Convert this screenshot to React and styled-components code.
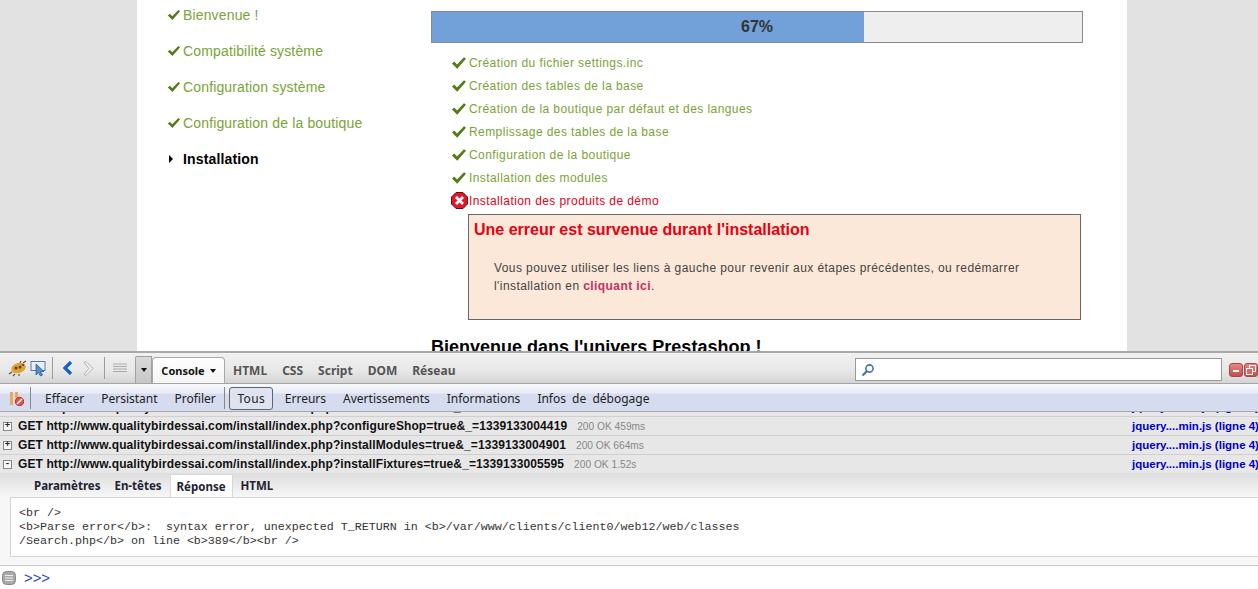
import React from "react";
import styled, { createGlobalStyle } from "styled-components";

const Global = createGlobalStyle`
  html, body { margin: 0; padding: 0; background: #e1e2e1; overflow: hidden; }
  #root { width: 1258px; height: 589px; overflow: hidden; }
  * { box-sizing: border-box; }
`;

const Screen = styled.div`
  width: 1258px; height: 589px; display: flex; flex-direction: column;
  font-family: "Liberation Sans", Arial, sans-serif;
`;
const Viewport = styled.div`
  height: 351px; overflow: hidden; background: #e1e2e1; display: flex;
  padding-left: 137px;
`;
const Page = styled.div`
  width: 990px; height: 400px; background: #fff; display: flex; padding-left: 30px;
`;
const Side = styled.ul`
  list-style: none; margin: 0; padding: 0; width: 264px;
`;
const SideItem = styled.li`
  height: 36px; display: flex; align-items: center; gap: 2px; font-size: 14px; letter-spacing: 0.15px;
  color: ${p => (p.$active ? "#000" : "#7aa336")};
  font-weight: ${p => (p.$active ? "bold" : "normal")};
  padding-bottom: 6px;
`;
const SideMark = styled.span`
  width: 14px; height: 14px; display: flex; align-items: center; justify-content: ${p => (p.$start ? "flex-start" : "center")}; flex: none;
  padding-left: ${p => (p.$start ? "1px" : "0")};
`;
const Main = styled.div`
  width: 652px; padding-top: 11px;
`;
const Progress = styled.div`
  height: 32px; border: 1px solid #8a8a8a; background: #eeeeee; position: relative;
  display: flex; align-items: center; justify-content: center;
`;
const Fill = styled.div`
  position: absolute; left: 0; top: 0; bottom: 0; background: #72a0d8;
`;
const Percent = styled.span`
  position: relative; font-weight: bold; font-size: 16px; color: #333;
`;
const Steps = styled.ul`
  list-style: none; margin: 8px 0 0; padding: 0 0 0 20px;
`;
const Step = styled.li`
  height: 23px; display: flex; align-items: center; font-size: 12px; letter-spacing: 0.42px;
  color: ${p => (p.$error ? "#e2001a" : "#7aa336")};
`;
const StepMark = styled.span`
  width: 18px; height: 18px; flex: none; display: flex; align-items: center; justify-content: flex-start;
`;
const ErrorBox = styled.div`
  margin: 2px 0 0 37px; width: 613px; height: 106px; border: 1px solid #666;
  background: #fbe8d8; padding: 6px 5px 0;
`;
const ErrorTitle = styled.div`
  color: #e60012; font-weight: bold; font-size: 16px; line-height: 18px;
`;
const ErrorText = styled.p`
  margin: 21px 20px 0 20px; font-size: 12px; line-height: 17.5px; color: #444; letter-spacing: 0.42px;
`;
const ErrorLink = styled.b`
  color: #c2305f;
`;
const Welcome = styled.h2`
  margin: 17px 0 0; font-size: 18px; line-height: 21px; color: #000; font-weight: bold;
`;

const Bug = styled.div`
  height: 238px; display: flex; flex-direction: column; background: #fff;
  font-family: "Noto Sans", "Open Sans", sans-serif; color: #222;
`;
const TopBar = styled.div`
  height: 33px; flex: none; border-top: 2px solid #a9a9a9; border-bottom: 1px solid #a5a5a5;
  background: linear-gradient(#f1f1f1, #e7e7e7 60%, #d4d4d4);
  display: flex; align-items: flex-end; padding-left: 7px; position: relative;
`;
const IconButton = styled.span`
  width: ${p => p.$w || 20}px; height: 30px; flex: none; display: flex; align-items: center; justify-content: center;
`;
const Sep = styled.span`
  width: 1px; height: 22px; background: #9c9c9c; flex: none; margin: 0 ${p => p.$m || 5}px 4px;
`;
const DropTab = styled.span`
  width: 17px; height: 27px; flex: none; margin-left: 5px; background: linear-gradient(#d9d9d9,#c7c7c7);
  border: 1px solid #a0a0a0; border-bottom: none; display: flex; align-items: center; justify-content: center;
  border-radius: 2px 0 0 0;
`;
const Caret = styled.span`
  width: 0; height: 0; border-left: 3.5px solid transparent; border-right: 3.5px solid transparent;
  border-top: 4px solid #111; display: inline-block;
`;
const ActiveTab = styled.span`
  width: 73px; height: 26px; margin: 0 8px 0 0; flex: none; background: linear-gradient(#fff, #f4f4f4);
  border: 1px solid #a8a8a8; border-bottom: none; border-radius: 4px 4px 0 0; display: flex; align-items: center; justify-content: center;
  gap: 5px; font-weight: bold; font-size: 11px; color: #111;
`;
const Tab = styled.span`
  height: 26px; flex: none; display: flex; align-items: center; margin-right: 15px; font-weight: bold; font-size: 12px; color: #555;
`;
const Search = styled.div`
  position: absolute; left: 855px; top: 5px; width: 367px; height: 23px; border: 1px solid #9a9a9a; background: #fff;
  display: flex; align-items: center; padding-left: 5px;
`;
const WinButtons = styled.div`
  position: absolute; left: 1229px; top: 10px; display: flex; gap: 1px;
`;
const WinButton = styled.span`
  width: 14px; height: 14px; border-radius: 3px; background: linear-gradient(#e88686,#c94a4a); border: 1px solid #b04444;
  display: flex; align-items: center; justify-content: center; flex: none;
`;
const SubBar = styled.div`
  height: 28px; flex: none; display: flex; align-items: center; padding: 1px 0 0 10px;
  background: linear-gradient(#f8f9fc, #e9ecf6 9px, #d6dbef 10px, #d6dcef);
  border-bottom: 1px solid #a9a9a9; font-size: 12px; color: #222; position: relative; z-index: 1;
`;
const SubButton = styled.span`
  flex: none; padding: 0 8.5px; display: flex; align-items: center; height: 23px; white-space: nowrap; word-spacing: ${p => p.$ws || 0}px;
  ${p => p.$on && `border: 1px solid #5c6470; border-radius: 3px; background: #dfe3f0; width: 44px; padding: 0; justify-content: center; margin: 0 3px 0 4px; letter-spacing: 0.4px;`}
`;
const SubSep = styled.span`
  width: 1px; height: 22px; background: #888; flex: none; margin: 0 ${p => p.$r || 0}px 0 ${p => p.$l || 0}px;
`;
const Logs = styled.div`
  flex: 1; display: flex; flex-direction: column; min-height: 0; overflow: hidden;
`;
const Row = styled.div`
  height: 19px; flex: none; display: flex; align-items: center; background: #e7e7e7; border-top: 1px solid #d0d0d0;
  padding-left: 3px; position: relative; font-size: 11px; white-space: nowrap;
  font-family: "Liberation Sans", sans-serif;
  margin-top: ${p => p.$offset || 0}px;
`;
const Toggle = styled.span`
  width: 9px; height: 9px; border: 1px solid #888; background: #f8f8f8; flex: none; margin-right: 6px;
  display: flex; align-items: center; justify-content: center; position: relative;
  font: bold 9px/7px "Liberation Mono", monospace; color: #222;
`;
const Url = styled.b`
  color: #111; font-size: 12px; letter-spacing: 0.1px; font-family: "Liberation Sans", sans-serif;
`;
const Status = styled.span`
  color: #888; margin-left: 10px; font-size: 10.2px;
`;
const Source = styled.span`
  position: absolute; left: 1132px; color: #0000c8; font-weight: bold; font-size: 11.5px;
`;
const Detail = styled.div`
  flex: none; background: linear-gradient(#dedede, #f7f7f7 24px); padding-left: 10px; height: 92px; display: flex; flex-direction: column;
`;
const DetailTabs = styled.div`
  height: 24px; flex: none; display: flex; align-items: flex-end; padding-left: 18px; font-family: "Noto Sans", sans-serif;
`;
const DetailTab = styled.span`
  height: 23px; padding: 0 6px; flex: none; display: flex; align-items: center; font-size: 11.5px; font-weight: bold; color: #223;
  margin-right: 2px;
  ${p => p.$on && `background: #fff; border: 1px solid #d8d8d8; border-bottom: none;`}
`;
const Code = styled.pre`
  margin: 0; height: 60px; border: 1px solid #d4d4d4; border-right: none; background: #fff; padding: 8px 0 0 8px;
  font: 11.67px/14px "Liberation Mono", monospace; color: #333;
`;
const CmdLine = styled.div`
  flex: 1; border-top: 1px solid #ccc; display: flex; align-items: center; padding-left: 2px; gap: 8px;
  background: #fff;
`;
const Prompt = styled.span`
  color: #2a3fc0; font: 15px "Liberation Sans", sans-serif; letter-spacing: -0.1px;
`;

const Check = () => (
  <svg width="16" height="14" viewBox="0 0 16 14">
    <path d="M1 7.5 L3.2 5.6 L6 8.5 L13 1.2 L15 2.8 L6.2 12.8 Z" fill="#567a16" />
  </svg>
);
const Play = () => (
  <svg width="6" height="8" viewBox="0 0 6 8"><path d="M1 0 L5 4 L1 8 Z" fill="#000" /></svg>
);
const ErrIcon = () => (
  <svg width="17" height="17" viewBox="0 0 17 17">
    <path d="M5 .5 H12 L16.5 5 V12 L12 16.5 H5 L.5 12 V5 Z" fill="#e0182c" stroke="#5e0f18" />
    <path d="M5 5 L12 12 M12 5 L5 12" stroke="#fff" strokeWidth="2.8" />
  </svg>
);

const sideItems = ["Bienvenue !", "Compatibilité système", "Configuration système", "Configuration de la boutique"];
const steps = [
  "Création du fichier settings.inc",
  "Création des tables de la base",
  "Création de la boutique par défaut et des langues",
  "Remplissage des tables de la base",
  "Configuration de la boutique",
  "Installation des modules",
];
const rows = [
  ["configureShop", "1339133004419", "459ms", true],
  ["installModules", "1339133004901", "664ms", true],
  ["installFixtures", "1339133005595", "1.52s", false],
];

export default function App() {
  return (
    <Screen>
      <Global />
      <Viewport>
        <Page>
          <Side>
            {sideItems.map(s => (
              <SideItem key={s}><SideMark><Check /></SideMark>{s}</SideItem>
            ))}
            <SideItem $active><SideMark $start><Play /></SideMark>Installation</SideItem>
          </Side>
          <Main>
            <Progress>
              <Fill style={{ width: "66.4%" }} />
              <Percent>67%</Percent>
            </Progress>
            <Steps>
              {steps.map(s => (
                <Step key={s}><StepMark><Check /></StepMark>{s}</Step>
              ))}
              <Step $error><StepMark><ErrIcon /></StepMark>Installation des produits de démo</Step>
            </Steps>
            <ErrorBox>
              <ErrorTitle>Une erreur est survenue durant l'installation</ErrorTitle>
              <ErrorText>
                Vous pouvez utiliser les liens à gauche pour revenir aux étapes précédentes, ou redémarrer l'installation en <ErrorLink>cliquant ici</ErrorLink>.
              </ErrorText>
            </ErrorBox>
            <Welcome>Bienvenue dans l'univers Prestashop !</Welcome>
          </Main>
        </Page>
      </Viewport>
      <Bug>
        <TopBar>
          <IconButton $w={22}>
            <svg width="20" height="17" viewBox="0 0 20 17">
              <path d="M4 12 L1 14 M7 14 L5 16 M11 14 L11 16 M15 3 L18 1 M12 3 L13 1" stroke="#5a4a30" strokeWidth="1.1" />
              <ellipse cx="10.5" cy="8" rx="7.5" ry="5" fill="#e0a232" transform="rotate(-18 10.5 8)" />
              <circle cx="8" cy="8" r="1.5" fill="#5c3a14" /><circle cx="12" cy="7" r="1.5" fill="#5c3a14" />
              <circle cx="15" cy="5" r="1" fill="#5c3a14" />
            </svg>
          </IconButton>
          <IconButton $w={19}>
            <svg width="17" height="17" viewBox="0 0 17 17">
              <rect x="1" y="1.5" width="14" height="9" fill="#e9eef7" stroke="#5a7ca8" />
              <path d="M6 4 L6 15 L8.5 12.5 L10.5 16 L12.5 15 L10.5 11.5 L14 11.5 Z" fill="#4f8fd8" stroke="#24527f" strokeWidth=".7" />
            </svg>
          </IconButton>
          <Sep $m={4} />
          <IconButton $w={20}>
            <svg width="11" height="14" viewBox="0 0 11 14"><path d="M9 1 L3 7 L9 13" fill="none" stroke="#1360c4" strokeWidth="3.2" /></svg>
          </IconButton>
          <IconButton $w={22}>
            <svg width="11" height="15" viewBox="0 0 11 15"><path d="M1 1.5 L3 .5 L10 7.5 L3 14.5 L1 13.5 L6 7.5 Z" fill="#f2f2f2" stroke="#b0b0b0" /></svg>
          </IconButton>
          <Sep $m={5} />
          <IconButton $w={20}>
            <svg width="14" height="10" viewBox="0 0 14 10"><path d="M0 1 H14 M0 3.5 H14 M0 6 H14 M0 8.5 H14" stroke="#aaa" /></svg>
          </IconButton>
          <DropTab><Caret /></DropTab>
          <ActiveTab>Console<Caret /></ActiveTab>
          <Tab>HTML</Tab><Tab>CSS</Tab><Tab>Script</Tab><Tab>DOM</Tab><Tab>Réseau</Tab>
          <Search>
            <svg width="14" height="14" viewBox="0 0 14 14">
              <circle cx="8.5" cy="5.5" r="3.6" fill="#fff" stroke="#3e75a8" strokeWidth="1.6" />
              <path d="M6 8 L1.5 12.5" stroke="#3e75a8" strokeWidth="2.2" />
            </svg>
          </Search>
          <WinButtons>
            <WinButton><svg width="8" height="8" viewBox="0 0 8 8"><path d="M1 5 H7" stroke="#fff" strokeWidth="2" /></svg></WinButton>
            <WinButton><svg width="10" height="10" viewBox="0 0 10 10"><rect x="3.5" y=".5" width="6" height="6" fill="none" stroke="#fff" /><rect x=".5" y="3.5" width="6" height="6" fill="#d66" stroke="#fff" /></svg></WinButton>
          </WinButtons>
        </TopBar>
        <SubBar>
          <svg width="14" height="15" viewBox="0 0 14 15">
            <rect x="0" y="1" width="3" height="13" fill="#e9a85a" /><rect x="5" y="1" width="3" height="6" fill="#e9a85a" />
            <circle cx="9.5" cy="10.5" r="4.2" fill="#e85050" stroke="#b03030" />
            <path d="M7 13 L12 8" stroke="#fff" strokeWidth="1.4" />
          </svg>
          <SubSep $l={6} $r={5.5} />
          <SubButton>Effacer</SubButton>
          <SubButton>Persistant</SubButton>
          <SubButton>Profiler</SubButton>
          <SubSep />
          <SubButton $on>Tous</SubButton>
          <SubButton>Erreurs</SubButton>
          <SubButton>Avertissements</SubButton>
          <SubButton>Informations</SubButton>
          <SubButton $ws={3}>Infos de débogage</SubButton>
        </SubBar>
        <Logs>
          <Row $offset={-15}>
            <Toggle>+</Toggle>
            <Url>GET http://www.qualitybirdessai.com/install/index.php?installTheme=true&amp;_=1339133003912</Url>
            <Status>200 OK 507ms</Status>
            <Source>jquery....min.js (ligne 4)</Source>
          </Row>
          {rows.map(([name, ts, time, closed]) => (
            <Row key={name}>
              <Toggle>{closed ? "+" : "-"}</Toggle>
              <Url>GET http://www.qualitybirdessai.com/install/index.php?{name}=true&amp;_={ts}</Url>
              <Status>200 OK {time}</Status>
              <Source>jquery....min.js (ligne 4)</Source>
            </Row>
          ))}
          <Detail>
            <DetailTabs>
              <DetailTab>Paramètres</DetailTab>
              <DetailTab>En-têtes</DetailTab>
              <DetailTab $on>Réponse</DetailTab>
              <DetailTab>HTML</DetailTab>
            </DetailTabs>
            <Code>{`<br />
<b>Parse error</b>:  syntax error, unexpected T_RETURN in <b>/var/www/clients/client0/web12/web/classes
/Search.php</b> on line <b>389</b><br />`}</Code>
          </Detail>
          <CmdLine>
            <svg width="14" height="14" viewBox="0 0 14 14">
              <rect x=".5" y=".5" width="13" height="13" rx="4" fill="#a9a9a9" stroke="#8a8a8a" />
              <path d="M3 4.5 H11 M3 7 H11 M3 9.5 H11" stroke="#eee" />
            </svg>
            <Prompt>&gt;&gt;&gt;</Prompt>
          </CmdLine>
        </Logs>
      </Bug>
    </Screen>
  );
}
